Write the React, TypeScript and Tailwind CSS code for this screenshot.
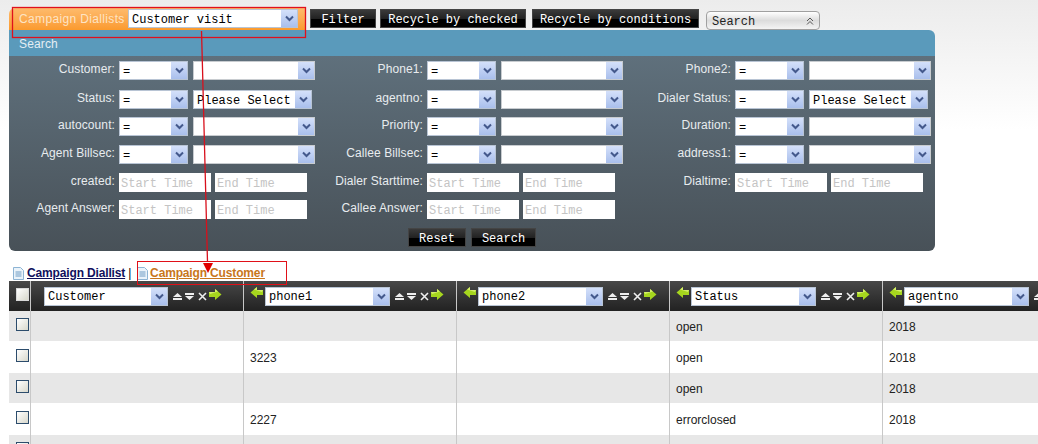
const mono = "font-['Liberation_Mono',monospace]";

function Chevron() {
  return (
    <svg width="9" height="7" viewBox="0 0 9 7">
      <path d="M1 1.5l3.5 3.5L8 1.5" fill="none" stroke="#44598c" strokeWidth="2" />
    </svg>
  );
}

function FakeSelect({ text = "", w, bare = false }: { text?: string; w: string; bare?: boolean }) {
  // bare: the empty ones, arrow runs out to the edge with a thin grey border
  return (
    <div
      className={`${w} h-[19px] shrink-0 bg-white flex items-center justify-between border ${
        bare ? "border-[#c8ccd0]" : "border-[#b8c4d4]"
      }`}
    >
      <span className={`${mono} text-[12px] leading-none text-black pl-[3px] pt-[2px] whitespace-pre`}>{text}</span>
      <span className="w-[16px] h-[17px] flex items-center justify-center bg-gradient-to-b from-[#d4e0fa] to-[#a9bfec]">
        <Chevron />
      </span>
    </div>
  );
}

function BlackButton({ label, w }: { label: string; w: string }) {
  return (
    <button
      className={`${w} h-[19px] block pt-[2px] ${mono} text-[12px] leading-none text-white bg-[linear-gradient(#3a3a3a,#222_50%,#000_55%,#000)] border border-[#444]`}
    >
      {label}
    </button>
  );
}

function TimeInput({ text }: { text: string }) {
  return (
    <div className={`w-[92px] h-[19px] shrink-0 bg-white flex items-center pl-[2px] pt-[2px] ${mono} text-[12px] leading-none text-[#c4c4c4] whitespace-pre`}>
      {text}
    </div>
  );
}

type Field = { label: string; kind?: "please" | "time" };

const rows: { h: string; fields: Field[] }[] = [
  { h: "h-[29px]", fields: [{ label: "Customer:" }, { label: "Phone1:" }, { label: "Phone2:" }] },
  {
    h: "h-[27px]",
    fields: [
      { label: "Status:", kind: "please" },
      { label: "agentno:" },
      { label: "Dialer Status:", kind: "please" },
    ],
  },
  { h: "h-[28px]", fields: [{ label: "autocount:" }, { label: "Priority:" }, { label: "Duration:" }] },
  { h: "h-[28px]", fields: [{ label: "Agent Billsec:" }, { label: "Callee Billsec:" }, { label: "address1:" }] },
  {
    h: "h-[27px]",
    fields: [
      { label: "created:", kind: "time" },
      { label: "Dialer Starttime:", kind: "time" },
      { label: "Dialtime:", kind: "time" },
    ],
  },
  { h: "h-[28px]", fields: [{ label: "Agent Answer:", kind: "time" }, { label: "Callee Answer:", kind: "time" }] },
];

function SearchField({ field }: { field: Field }) {
  return (
    <div className="w-[308px] flex items-start shrink-0">
      <div className="w-[106px] h-[15px] flex items-center justify-end text-[12px] tracking-[0.1px] text-[#e8ecef] whitespace-nowrap">
        {field.label}
      </div>
      {field.kind === "time" ? (
        <div className="flex ml-[4px] gap-[4px]">
          <TimeInput text="Start Time" />
          <TimeInput text="End Time" />
        </div>
      ) : (
        <div className="flex ml-[4px] gap-[5px]">
          <FakeSelect text="=" w="w-[69px]" />
          {field.kind === "please" ? (
            <FakeSelect text="Please Select" w="w-[119px]" />
          ) : (
            <FakeSelect w="w-[122px]" bare />
          )}
        </div>
      )}
    </div>
  );
}

function GreenArrow({ left = false }: { left?: boolean }) {
  return (
    <svg width="13" height="11" viewBox="0 0 13 11" className={left ? "-scale-x-100 shrink-0" : "shrink-0"}>
      <path d="M0 3h6V0l6.5 5.5L6 11V8H0z" fill="#a6d61e" />
      <path d="M0 3h6V0l3 2.5L1 5z" fill="#d4ee6a" />
    </svg>
  );
}

function SortIcons() {
  return (
    <div className="flex items-center ml-[5px] shrink-0">
      <svg width="9" height="7" viewBox="0 0 9 7">
        <path d="M4.5 0L9 4H0z M0 5h9v2H0z" fill="#eee" />
      </svg>
      <svg width="9" height="7" viewBox="0 0 9 7" className="ml-[3px]">
        <path d="M0 0h9v2H0z M0 3h9L4.5 7z" fill="#eee" />
      </svg>
      <svg width="9" height="9" viewBox="0 0 9 9" className="ml-[4px]">
        <path d="M1 1l7 7M8 1L1 8" stroke="#eee" strokeWidth="1.6" />
      </svg>
      <span className="ml-[2px] -mt-[3px]">
        <GreenArrow />
      </span>
    </div>
  );
}

function DocIcon() {
  return (
    <svg width="11" height="13" viewBox="0 0 11 13" className="shrink-0">
      <path d="M.5.5h7l3 3v9H.5z" fill="#eaf3fa" stroke="#8db4d4" />
      <path d="M2.5 5h6M2.5 7h6M2.5 9h6" stroke="#6e9cc4" />
    </svg>
  );
}

function CheckBox({ dark = false }: { dark?: boolean }) {
  return (
    <div
      className={`w-[13px] h-[13px] bg-gradient-to-br from-white to-[#d8d8cc] border ${
        dark ? "border-[#d8d8d8]" : "border-[#2c4c6c]"
      }`}
    />
  );
}

const columns = ["Customer", "phone1", "phone2", "Status", "agentno"];

const tableRows = [
  { h: "h-[30px]", bg: "bg-[#e7e7e7]", check: "pt-[7px]", phone1: "", status: "open" },
  { h: "h-[32px]", bg: "bg-white", check: "pt-[8px]", phone1: "3223", status: "open" },
  { h: "h-[30px]", bg: "bg-[#e7e7e7]", check: "pt-[7px]", phone1: "", status: "open" },
  { h: "h-[32px]", bg: "bg-white", check: "pt-[8px]", phone1: "2227", status: "errorclosed" },
  { h: "h-[30px]", bg: "bg-[#e7e7e7]", check: "pt-[7px]", phone1: "", status: "" },
];

function Annotations() {
  // red markup drawn on top of the screenshot
  return (
    <svg width="1038" height="444" className="absolute left-0 top-0 pointer-events-none">
      <rect x="12.5" y="7.5" width="293" height="30" fill="none" stroke="#e0101c" strokeWidth="1.3" />
      <rect x="137.5" y="261.5" width="149" height="23" fill="none" stroke="#e01018" />
      <path d="M201.5 31L202 49L207.500 262" fill="none" stroke="#d8101c" strokeWidth="1.3" />
      <path d="M203 263h10l-5 10z" fill="#e00000" />
    </svg>
  );
}

export default function App() {
  return (
    <div className="relative w-[1038px] h-[444px] overflow-hidden bg-[linear-gradient(#ececec,#ffffff_130px)] font-['Liberation_Sans',sans-serif]">
      <div className="flex pl-[9px] pt-[8px] h-[30px]">
        <div className="w-[296px] h-[22px] flex items-center rounded-tl-[6px] bg-gradient-to-b from-[#fdbb6c] to-[#fb9a2c]">
          <span className="w-[119px] pl-[10px] text-[12px] tracking-[0.35px] text-[#fde4c4] whitespace-nowrap">
            Campaign Diallists
          </span>
          <div className="-mt-[1px]">
            <FakeSelect text="Customer visit" w="w-[170px]" />
          </div>
        </div>
        <div className="flex items-start ml-[5px] mt-px gap-[4px]">
          <BlackButton label="Filter" w="w-[66px]" />
          <BlackButton label="Recycle by checked" w="w-[146px]" />
          <div className="ml-[2px]">
            <BlackButton label="Recycle by conditions" w="w-[167px]" />
          </div>
        </div>
        <div className="ml-[7px] mt-[3px] w-[114px] h-[19px] flex items-center justify-between px-[5px] rounded-[4px] border border-[#a0a0a0] bg-gradient-to-b from-white via-[#dcdcdc] to-[#f4f4f4]">
          <span className={`${mono} text-[12px] leading-none pt-[2px] text-[#222]`}>Search</span>
          <svg width="8" height="8" viewBox="0 0 8 8">
            <path d="M1 4l3-3 3 3M1 7.500l3-3 3 3" fill="none" stroke="#555" />
          </svg>
        </div>
      </div>

      <div className="ml-[9px] w-[926px]">
        <div className="h-[26px] flex items-center pl-[10px] pt-px rounded-tr-[6px] bg-[#5a9abb] text-[12px] tracking-[0.15px] text-[#e4eef4]">
          Search
        </div>
        <div className="h-[195px] pt-[5px] rounded-b-[6px] bg-gradient-to-b from-[#5f707c] to-[#485158]">
          {rows.map((row, i) => (
            <div key={i} className={`flex ${row.h}`}>
              {row.fields.map((f) => (
                <SearchField key={f.label} field={f} />
              ))}
            </div>
          ))}
          <div className="flex ml-[399px] gap-[5px]">
            <BlackButton label="Reset" w="w-[58px]" />
            <BlackButton label="Search" w="w-[65px]" />
          </div>
        </div>
      </div>

      <div className="flex items-center h-[30px] pl-[13px] pt-[14px] text-[12px] font-bold leading-none tracking-[-0.15px]">
        <DocIcon />
        <a className="ml-[3px] text-[#10105c] underline whitespace-nowrap">Campaign Diallist</a>
        <span className="ml-[3px] font-normal text-black">|</span>
        <span className="ml-[6px]">
          <DocIcon />
        </span>
        <a className="ml-[2px] text-[#c8761a] underline whitespace-nowrap">Campaign Customer</a>
      </div>

      <div className="ml-[9px] w-[1087px] text-[12px] text-[#222]">
        <div className="grid grid-cols-[22px_repeat(5,213px)] h-[30px] bg-gradient-to-b from-[#484848] to-[#222]">
          <div className="border-r border-[#c8c8c8] pl-[7px] pt-[7px]">
            <CheckBox dark />
          </div>
          {columns.map((c, i) => (
            <div
              key={c}
              className={`border-r border-[#c8c8c8] flex items-center ${i === 0 ? "pl-[13px]" : "pl-[6px]"}`}
            >
              {i > 0 && (
                <span className="mr-[2px] -mt-[7px]">
                  <GreenArrow left />
                </span>
              )}
              <FakeSelect text={c} w={i === 0 ? "w-[124px]" : "w-[125px]"} />
              <SortIcons />
            </div>
          ))}
        </div>
        {tableRows.map((r, i) => (
          <div key={i} className={`grid grid-cols-[22px_repeat(5,213px)] ${r.h} ${r.bg}`}>
            <div className={`border-r border-[#c8c8c8] pl-[7px] ${r.check}`}>
              <CheckBox />
            </div>
            <div className="border-r border-[#c8c8c8]" />
            <div className="border-r border-[#c8c8c8] flex items-center pl-[6px] pt-[1px]">{r.phone1}</div>
            <div className="border-r border-[#c8c8c8]" />
            <div className="border-r border-[#c8c8c8] flex items-center pl-[6px] pt-[1px]">{r.status}</div>
            <div className="border-r border-[#c8c8c8] flex items-center pl-[6px] pt-[1px]">{r.status ? "2018" : ""}</div>
          </div>
        ))}
      </div>

      <Annotations />
    </div>
  );
}
